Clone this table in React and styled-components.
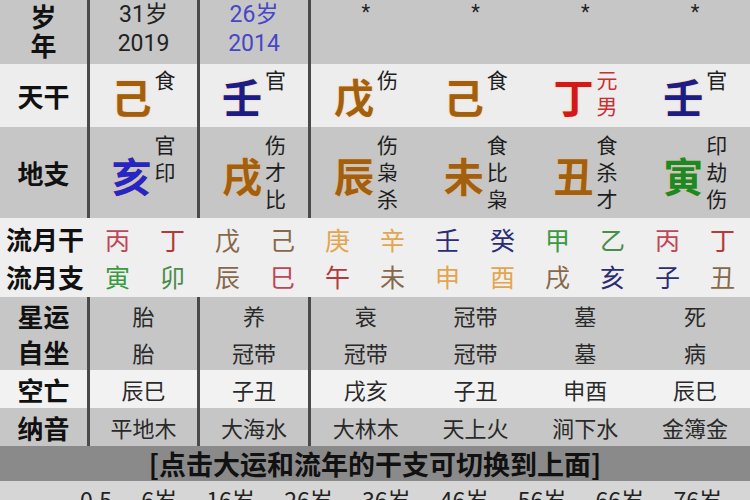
import React from "react";
import styled, { createGlobalStyle } from "styled-components";

const GlobalStyle = createGlobalStyle`
  html, body {
    margin: 0;
    padding: 0;
    background: #d4d4d4;
  }
  body {
    width: 750px;
    height: 500px;
    overflow: hidden;
    font-family: "Noto Sans CJK SC", "Noto Sans", sans-serif;
  }
`;

const GRAY = "#c6c6c6";
const LIGHT = "#ededed";
const SEP = "#4a4a4a";

const EARTH = "#a2600e";
const WATER = "#1c1c86";
const FIRE = "#d21818";
const WOOD = "#1b8a26";
const BLUE = "#2626c4";

const pillars = [
  { age: "31岁", year: "2019", ageColor: "#222" },
  { age: "26岁", year: "2014", ageColor: "#4646c8" },
  { star: true },
  { star: true },
  { star: true },
  { star: true },
];

const stems = [
  { ch: "己", color: EARTH, sup: ["食"] },
  { ch: "壬", color: WATER, sup: ["官"] },
  { ch: "戊", color: EARTH, sup: ["伤"] },
  { ch: "己", color: EARTH, sup: ["食"] },
  { ch: "丁", color: FIRE, sup: ["元", "男"], supColor: "#c83030" },
  { ch: "壬", color: WATER, sup: ["官"] },
];

const branches = [
  { ch: "亥", color: BLUE, sub: ["官", "印"] },
  { ch: "戌", color: EARTH, sub: ["伤", "才", "比"] },
  { ch: "辰", color: EARTH, sub: ["伤", "枭", "杀"] },
  { ch: "未", color: EARTH, sub: ["食", "比", "枭"] },
  { ch: "丑", color: EARTH, sub: ["食", "杀", "才"] },
  { ch: "寅", color: WOOD, sub: ["印", "劫", "伤"] },
];

const C = {
  red: "#be4656",
  red2: "#b23a3a",
  brown: "#86684a",
  orange: "#e2a64e",
  navy: "#2c2c74",
  green: "#3a9a3e",
  green2: "#4a8c4a",
};

const monthStems = [
  ["丙", C.red], ["丁", C.red2], ["戊", C.brown], ["己", C.brown],
  ["庚", C.orange], ["辛", C.orange], ["壬", C.navy], ["癸", C.navy],
  ["甲", C.green], ["乙", C.green2], ["丙", C.red], ["丁", C.red2],
];

const monthBranches = [
  ["寅", C.green], ["卯", C.green2], ["辰", C.brown], ["巳", C.red],
  ["午", C.red2], ["未", C.brown], ["申", C.orange], ["酉", C.orange],
  ["戌", C.brown], ["亥", C.navy], ["子", C.navy], ["丑", C.brown],
];

const xingyun = ["胎", "养", "衰", "冠带", "墓", "死"];
const zizuo = ["胎", "冠带", "冠带", "冠带", "墓", "病"];
const kongwang = ["辰巳", "子丑", "戌亥", "子丑", "申酉", "辰巳"];
const nayin = ["平地木", "大海水", "大林木", "天上火", "涧下水", "金簿金"];
const dayun = ["0.5", "6岁", "16岁", "26岁", "36岁", "46岁", "56岁", "66岁", "76岁"];

function App() {
  return (
    <>
      <GlobalStyle />
      <Board>
        <Row $h={64} $bg={GRAY}>
          <Label $sep $align="start">
            <span>岁</span>
            <span>年</span>
          </Label>
          {pillars.map((p, i) => (
            <Cell key={i} $sep={i < 2} $align="start">
              {p.star ? (
                <Star>*</Star>
              ) : (
                <AgeText style={{ color: p.ageColor }}>
                  <span>{p.age}</span>
                  <span>{p.year}</span>
                </AgeText>
              )}
            </Cell>
          ))}
        </Row>

        <Row $h={63} $bg={LIGHT}>
          <Label $sep>天干</Label>
          {stems.map((s, i) => (
            <Cell key={i} $sep={i < 2}>
              <Main $color={s.color}>{s.ch}</Main>
              <Side $color={s.supColor} $top={2}>
                {s.sup.map((t, j) => (
                  <span key={j}>{t}</span>
                ))}
              </Side>
            </Cell>
          ))}
        </Row>

        <Row $h={91} $bg={GRAY}>
          <Label $sep>地支</Label>
          {branches.map((b, i) => (
            <Cell key={i} $sep={i < 2}>
              <Main $color={b.color} $drop={4}>{b.ch}</Main>
              <Side $top={4} $lh={27}>
                {b.sub.map((t, j) => (
                  <span key={j}>{t}</span>
                ))}
              </Side>
            </Cell>
          ))}
        </Row>

        <MonthBlock>
          <MonthRow>
            <MonthLabel>流月干</MonthLabel>
            {monthStems.map(([ch, color], i) => (
              <MonthChar key={i} $color={color}>{ch}</MonthChar>
            ))}
          </MonthRow>
          <MonthRow>
            <MonthLabel>流月支</MonthLabel>
            {monthBranches.map(([ch, color], i) => (
              <MonthChar key={i} $color={color}>{ch}</MonthChar>
            ))}
          </MonthRow>
        </MonthBlock>

        <Row $h={73} $bg={GRAY}>
          <Label $sep $align="stretch">
            <Line>星运</Line>
            <Line>自坐</Line>
          </Label>
          {xingyun.map((t, i) => (
            <Cell key={i} $sep={i < 2} $align="stretch">
              <TextStack>
                <Line>{t}</Line>
                <Line>{zizuo[i]}</Line>
              </TextStack>
            </Cell>
          ))}
        </Row>

        <Row $h={38} $bg="#f2f2f2">
          <Label $sep>空亡</Label>
          {kongwang.map((t, i) => (
            <Cell key={i} $sep={i < 2}>
              <Plain>{t}</Plain>
            </Cell>
          ))}
        </Row>

        <Row $h={38} $bg={GRAY}>
          <Label $sep>纳音</Label>
          {nayin.map((t, i) => (
            <Cell key={i} $sep={i < 2}>
              <Plain>{t}</Plain>
            </Cell>
          ))}
        </Row>

        <Banner>[点击大运和流年的干支可切换到上面]</Banner>

        <DayunRow>
          {dayun.map((t, i) => (
            <DayunItem key={i}>{t}</DayunItem>
          ))}
        </DayunRow>
      </Board>
    </>
  );
}

export default App;

const Board = styled.div`
  width: 750px;
  height: 500px;
  display: flex;
  flex-direction: column;
  overflow: hidden;
`;

const Row = styled.div`
  display: grid;
  grid-template-columns: 90px 110px 111px repeat(4, 1fr);
  height: ${(p) => p.$h}px;
  background: ${(p) => p.$bg};
  flex-shrink: 0;
`;

const Cell = styled.div`
  display: flex;
  justify-content: center;
  align-items: ${(p) => (p.$align === "start" ? "flex-start" : p.$align === "stretch" ? "stretch" : "center")};
  gap: 3px;
  border-right: ${(p) => (p.$sep ? `3px solid ${SEP}` : "none")};
  min-width: 0;
`;

const Label = styled(Cell)`
  flex-direction: column;
  justify-content: ${(p) => (p.$align === "start" ? "flex-start" : p.$align === "stretch" ? "stretch" : "center")};
  align-items: center;
  gap: 0;
  font-size: 26px;
  font-weight: 700;
  color: #111;
  line-height: 29px;
  padding-top: ${(p) => (p.$align === "start" ? "1px" : "0")};
`;

const AgeText = styled.div`
  display: flex;
  flex-direction: column;
  align-items: center;
  font-family: "Roboto", "Noto Sans CJK SC", sans-serif;
  font-size: 23px;
  line-height: 29px;
`;

const Star = styled.div`
  font-family: "Roboto", sans-serif;
  font-size: 20px;
  line-height: 24px;
  color: #222;
`;

const Main = styled.div`
  font-size: 40px;
  line-height: 44px;
  font-weight: 700;
  color: ${(p) => p.$color};
  margin-top: ${(p) => p.$drop || 0}px;
  text-shadow: 0 0 1px rgba(255, 190, 120, 0.8), 0 0 2px rgba(255, 200, 140, 0.5);
`;

const Side = styled.div`
  align-self: flex-start;
  display: flex;
  flex-direction: column;
  padding-top: ${(p) => p.$top}px;
  font-size: 21px;
  line-height: ${(p) => p.$lh || 26}px;
  color: ${(p) => p.$color || "#1e1e1e"};
`;

const TextStack = styled.div`
  display: flex;
  flex-direction: column;
  flex: 1;
  font-size: 22px;
  color: #2a2a2a;
`;

const Line = styled.div`
  flex: 1;
  display: flex;
  align-items: center;
  justify-content: center;
`;

const Plain = styled.div`
  font-size: 22px;
  color: #2a2a2a;
`;

const MonthBlock = styled.div`
  height: 79px;
  flex-shrink: 0;
  background: #efefef;
  display: flex;
  flex-direction: column;
  padding: 2px 0;
  box-sizing: border-box;
`;

const MonthRow = styled.div`
  flex: 1;
  display: grid;
  grid-template-columns: 90px repeat(12, 1fr);
  align-items: center;
`;

const MonthLabel = styled.div`
  font-size: 26px;
  font-weight: 700;
  color: #111;
  text-align: center;
`;

const MonthChar = styled.div`
  font-size: 25px;
  text-align: center;
  color: ${(p) => p.$color};
`;

const Banner = styled.div`
  height: 35px;
  flex-shrink: 0;
  background: #8a8a8a;
  display: flex;
  align-items: center;
  justify-content: center;
  font-size: 27px;
  font-weight: 700;
  color: #111;
`;

const DayunRow = styled.div`
  flex: 1;
  background: #d6d6d6;
  display: flex;
  justify-content: space-between;
  padding: 4px 28px 0 80px;
`;

const DayunItem = styled.div`
  font-size: 23px;
  line-height: 28px;
  color: #222;
`;
